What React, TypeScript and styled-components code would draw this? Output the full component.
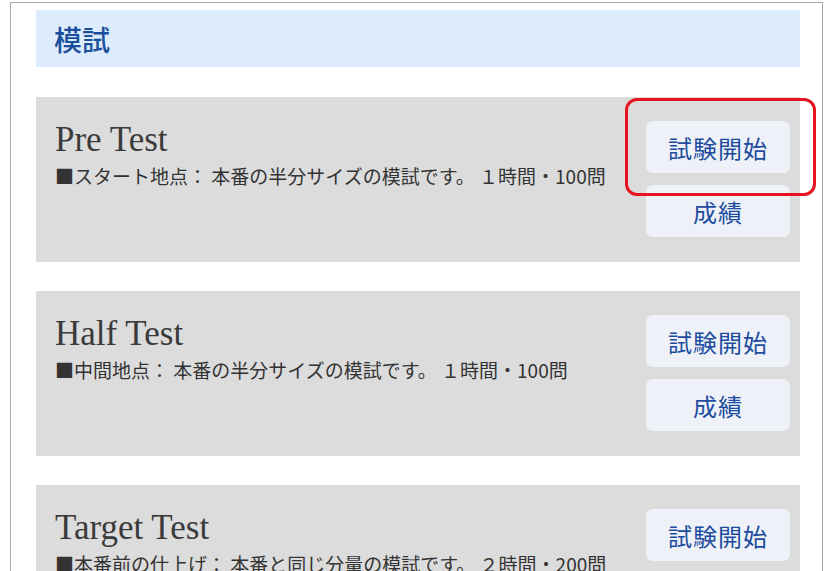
import React from 'react';
import styled, { createGlobalStyle } from 'styled-components';

const Global = createGlobalStyle`
  html, body {
    margin: 0;
    padding: 0;
    background: #fff;
    overflow: hidden;
  }
  body {
    font-family: "Noto Sans CJK JP", "Noto Sans", sans-serif;
  }
`;

const Frame = styled.div`
  box-sizing: border-box;
  width: 813px;
  height: 600px;
  margin: 2px 0 0 10px;
  border: 1px solid #a8a8a8;
  border-bottom: none;
  padding: 7px 22px 0 25px;
`;

const Heading = styled.h2`
  margin: 0;
  height: 57px;
  display: flex;
  align-items: center;
  padding-left: 18px;
  background: #dcecfc;
  color: #1b4f9b;
  font-size: 28px;
  font-weight: 500;
  font-family: "Noto Sans CJK JP", sans-serif;
`;

const List = styled.div`
  display: flex;
  flex-direction: column;
  gap: 29px;
  margin-top: 30px;
`;

const Card = styled.section`
  display: flex;
  justify-content: space-between;
  align-items: flex-start;
  background: #dcdcdc;
  padding: 24px 10px 25px 19px;
`;

const Info = styled.div`
  display: flex;
  flex-direction: column;
`;

const Title = styled.h3`
  margin: 0;
  font-family: "Liberation Serif", serif;
  font-weight: 400;
  font-size: 35px;
  line-height: 37px;
  color: #3a3a3a;
`;

const Desc = styled.p`
  margin: 5px 0 0;
  font-size: 19px;
  line-height: 26px;
  color: #333;
  white-space: nowrap;
`;

const Actions = styled.div`
  position: relative;
  display: flex;
  flex-direction: column;
  gap: 12px;
`;

const ActionButton = styled.button`
  width: 144px;
  height: 52px;
  border: none;
  border-radius: 7px;
  background: #eef2f8;
  color: #1d4c9e;
  font-family: "Noto Sans CJK JP", sans-serif;
  font-size: 24px;
  letter-spacing: 1px;
  cursor: pointer;
`;

const Highlight = styled.div`
  position: absolute;
  left: -21px;
  top: -23px;
  width: 191px;
  height: 98px;
  box-sizing: border-box;
  border: 3px solid #e5141f;
  border-radius: 12px;
  pointer-events: none;
`;

type Test = {
  name: string;
  desc: string;
  results: boolean;
  marked?: boolean;
};

const tests: Test[] = [
  { name: 'Pre Test', desc: '■スタート地点： 本番の半分サイズの模試です。 １時間・100問', results: true, marked: true },
  { name: 'Half Test', desc: '■中間地点： 本番の半分サイズの模試です。 １時間・100問', results: true },
  { name: 'Target Test', desc: '■本番前の仕上げ： 本番と同じ分量の模試です。 ２時間・200問', results: true },
];

export default function App() {
  return (
    <>
      <Global />
      <Frame>
        <Heading>模試</Heading>
        <List>
          {tests.map((t) => (
            <Card key={t.name}>
              <Info>
                <Title>{t.name}</Title>
                <Desc>{t.desc}</Desc>
              </Info>
              <Actions>
                {t.marked && <Highlight />}
                <ActionButton>試験開始</ActionButton>
                {t.results && <ActionButton>成績</ActionButton>}
              </Actions>
            </Card>
          ))}
        </List>
      </Frame>
    </>
  );
}
